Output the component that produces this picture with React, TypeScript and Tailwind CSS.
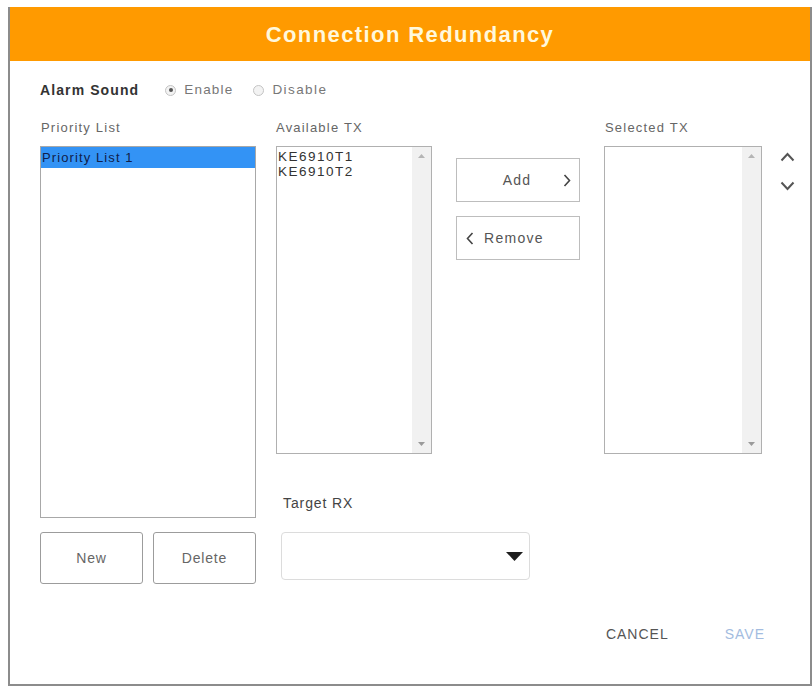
import React from 'react';

const FONT = { fontFamily: '"Liberation Sans", Arial, sans-serif' };

function Radio({ checked }: { checked?: boolean }) {
  return (
    <span className="flex h-[11px] w-[11px] items-center justify-center rounded-full border border-[#c4c4c4] bg-[#f3f3f3]">
      {checked && <span className="h-[4px] w-[4px] rounded-full bg-[#555]" />}
    </span>
  );
}

function ScrollTrack() {
  return (
    <div className="flex w-[19px] flex-col items-center justify-between bg-[#f1f1f1] py-[7px]">
      <svg width="7" height="4" viewBox="0 0 7 4">
        <polygon points="0,4 3.5,0 7,4" fill="#b5b5b5" />
      </svg>
      <svg width="7" height="4" viewBox="0 0 7 4">
        <polygon points="0,0 7,0 3.5,4" fill="#9a9a9a" />
      </svg>
    </div>
  );
}

function Chevron({ dir, className }: { dir: 'left' | 'right' | 'up' | 'down'; className?: string }) {
  if (dir === 'up' || dir === 'down') {
    return (
      <svg width="15" height="10" viewBox="0 0 15 10" className={className}>
        <polyline
          points={dir === 'up' ? '1.5,8.5 7.5,2 13.5,8.5' : '1.5,1.5 7.5,8 13.5,1.5'}
          fill="none"
          stroke="#555"
          strokeWidth="2"
        />
      </svg>
    );
  }
  return (
    <svg width="8" height="13" viewBox="0 0 8 13" className={className}>
      <polyline
        points={dir === 'right' ? '1.5,1 6.5,6.5 1.5,12' : '6.5,1 1.5,6.5 6.5,12'}
        fill="none"
        stroke="#444"
        strokeWidth="1.6"
      />
    </svg>
  );
}

export default function App() {
  return (
    <div className="min-h-[687px] bg-white pl-[8px] pt-[7px]" style={FONT}>
      <div className="flex h-[679px] w-[804px] flex-col border-x-2 border-b-2 border-[#8c8c8c] bg-white">
        {/* title bar */}
        <div className="flex h-[54px] items-center justify-center bg-[#ff9a00]">
          <h1 className="text-[22px] font-bold tracking-[1.4px] text-[#fff8dc]">Connection Redundancy</h1>
        </div>

        <div className="flex flex-col pl-[30px]">
          {/* alarm sound */}
          <div className="mt-[21px] flex h-[16px] items-center">
            <span className="text-[14px] font-semibold tracking-[1.1px] text-[#333]">Alarm Sound</span>
            <span className="ml-[26px]"><Radio checked /></span>
            <span className="ml-[8px] text-[13.5px] tracking-[1.2px] text-[#777]">Enable</span>
            <span className="ml-[20px]"><Radio /></span>
            <span className="ml-[8px] text-[13.5px] tracking-[1.4px] text-[#777]">Disable</span>
          </div>

          <div className="mt-[21px] flex">
            {/* priority list column */}
            <div className="flex w-[216px] flex-col">
              <div className="h-[18px] pl-[1px] text-[13px] leading-[18px] tracking-[1.2px] text-[#666]">Priority List</div>
              <div className="mt-[9px] h-[372px] border border-[#a8a8a8] bg-white">
                <div className="h-[21px] bg-[#3393f5] pl-[1px] text-[13px] leading-[21px] tracking-[1.1px] text-[#10204a]">
                  Priority List 1
                </div>
              </div>
              <div className="mt-[14px] flex gap-[10px]">
                <button className="h-[52px] w-[103px] rounded-[3px] border-[1.5px] border-[#9c9c9c] text-[14px] tracking-[0.8px] text-[#666]">
                  New
                </button>
                <button className="h-[52px] w-[103px] rounded-[3px] border-[1.5px] border-[#9c9c9c] text-[14px] tracking-[0.8px] text-[#666]">
                  Delete
                </button>
              </div>
            </div>

            {/* transfer area */}
            <div className="ml-[20px] flex flex-col">
              <div className="flex">
                <div className="flex w-[156px] flex-col">
                  <div className="h-[18px] text-[13px] leading-[18px] tracking-[1.2px] text-[#666]">Available TX</div>
                  <div className="mt-[9px] flex h-[308px] border border-[#b0b0b0]">
                    <div className="flex-1 pl-[1px] pt-[2px] text-[13.5px] leading-[15px] tracking-[1.5px] text-[#333]">
                      <div>KE6910T1</div>
                      <div>KE6910T2</div>
                    </div>
                    <ScrollTrack />
                  </div>
                </div>

                <div className="ml-[24px] flex w-[124px] flex-col pt-[39px]">
                  <button className="relative flex h-[44px] items-center justify-center border border-[#bdbdbd] text-[14px] tracking-[1.2px] text-[#555]">
                    <span className="-ml-[2px]">Add</span>
                    <Chevron dir="right" className="absolute right-[8px] top-[15px]" />
                  </button>
                  <button className="mt-[14px] flex h-[44px] items-center border border-[#bdbdbd] pl-[9px] text-[14px] tracking-[1.3px] text-[#555]">
                    <Chevron dir="left" />
                    <span className="ml-[10px]">Remove</span>
                  </button>
                </div>

                <div className="ml-[24px] flex w-[158px] flex-col">
                  <div className="h-[18px] pl-[1px] text-[13px] leading-[18px] tracking-[1.2px] text-[#666]">Selected TX</div>
                  <div className="mt-[9px] flex h-[308px] border border-[#b0b0b0]">
                    <div className="flex-1" />
                    <ScrollTrack />
                  </div>
                </div>

                <div className="ml-[18px] flex flex-col gap-[19px] pt-[33px]">
                  <Chevron dir="up" />
                  <Chevron dir="down" />
                </div>
              </div>

              {/* target receiver */}
              <div className="ml-[7px] mt-[41px] h-[16px] text-[14px] leading-[16px] tracking-[0.9px] text-[#444]">Target RX</div>
              <div className="ml-[5px] mt-[21px] flex h-[48px] w-[249px] items-center justify-end rounded-[4px] border border-[#dcdcdc] pr-[6px]">
                <svg width="17" height="9" viewBox="0 0 17 9">
                  <polygon points="0,0 17,0 8.5,9" fill="#1e1e1e" />
                </svg>
              </div>
            </div>
          </div>

          {/* footer actions */}
          <div className="mt-[42px] flex h-[16px] items-center justify-end pr-[45px] text-[14px] leading-[16px] tracking-[1px]">
            <span className="text-[#555]">CANCEL</span>
            <span className="ml-[56px] text-[#a3bce0]">SAVE</span>
          </div>
        </div>
      </div>
    </div>
  );
}
